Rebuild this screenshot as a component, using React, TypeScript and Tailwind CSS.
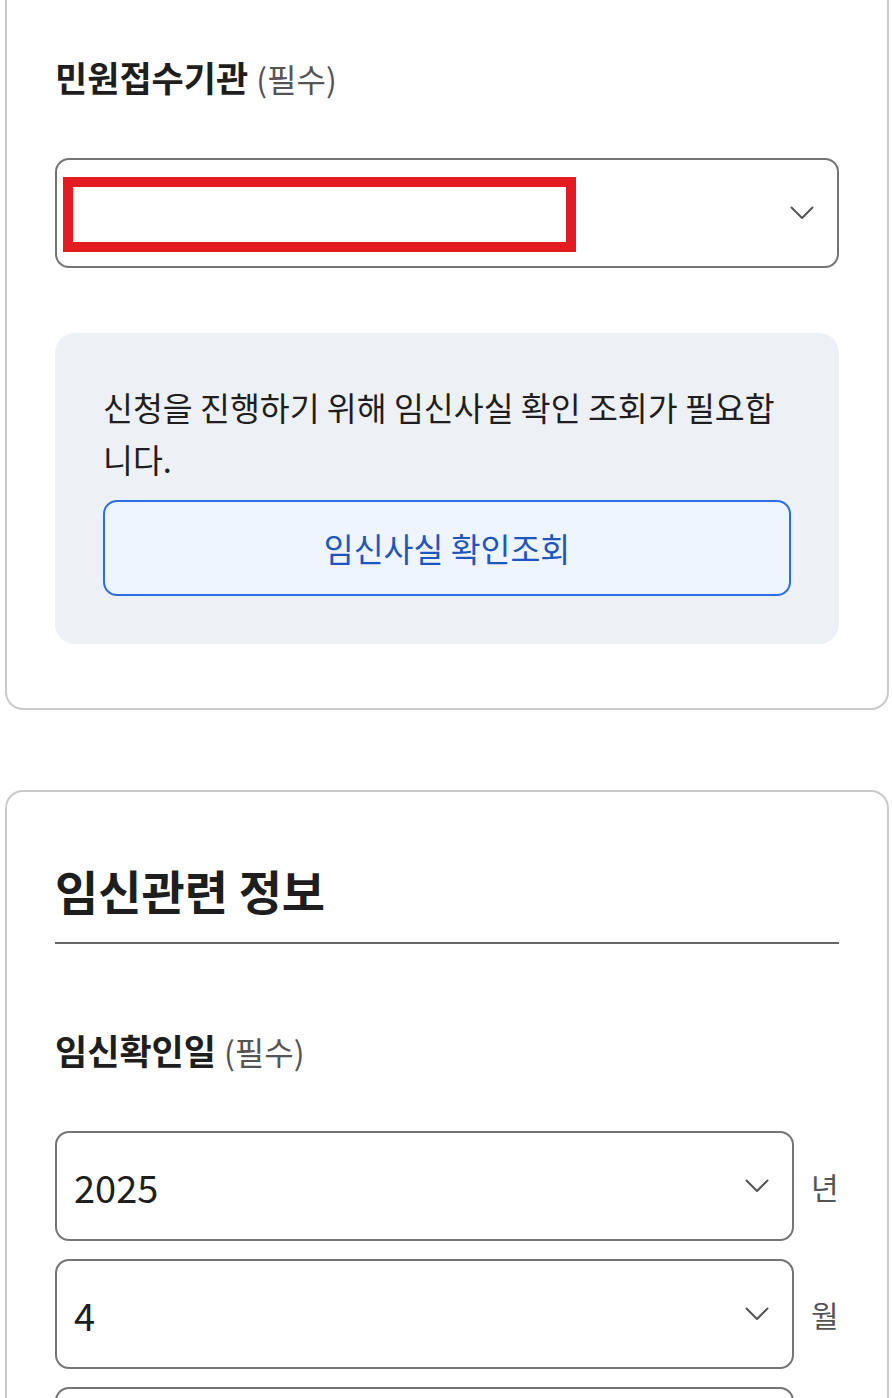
import React from 'react';

const font = "font-['Noto_Sans_CJK_KR','Noto_Sans',sans-serif]";

function Chevron() {
  return (
    <svg width="24" height="14" viewBox="0 0 24 14" fill="none" className="shrink-0">
      <path d="M1.5 1.5 L12 12 L22.5 1.5" stroke="#555" strokeWidth="2" strokeLinecap="round" strokeLinejoin="round" />
    </svg>
  );
}

function FieldLabel({ text }: { text: string }) {
  return (
    <div className="mb-[57px] flex items-baseline gap-[8px] leading-[46px]">
      <span className="text-[35px] font-bold text-[#1e1e1e]">{text}</span>
      <span className="text-[32px] text-[#555]">(필수)</span>
    </div>
  );
}

function DateSelect({ value, unit }: { value: string; unit: string }) {
  return (
    <div className="flex items-center gap-[17px]">
      <div className="flex h-[110px] flex-1 items-center justify-between rounded-[14px] border-2 border-[#757575] bg-white pl-[17px] pr-[23px]">
        <span className="text-[38px] text-[#1e1e1e]">{value}</span>
        <Chevron />
      </div>
      <span className="w-[28px] text-[30px] text-[#555]">{unit}</span>
    </div>
  );
}

export default function App() {
  return (
    <div className={`${font} min-h-[1398px] bg-white pb-10`}>
      {/* 민원접수기관 카드 (상단은 스크롤로 잘림) */}
      <div className="ml-[5px] w-[884px] rounded-b-[18px] border-2 border-t-0 border-[#cacaca] px-[48px] pt-[54px] pb-[64px]">
        <FieldLabel text="민원접수기관" />

        <div className="relative flex h-[110px] items-center justify-end rounded-[14px] border-2 border-[#757575] bg-white pr-[23px]">
          {/* 가림 처리 */}
          <div className="absolute left-[6px] top-[17px] h-[75px] w-[513px] border-[10px] border-[#e41b1f]" />
          <Chevron />
        </div>

        <div className="mt-[65px] flex flex-col gap-[15px] rounded-[20px] bg-[#edf0f5] p-[48px]">
          <p className="text-[32.5px] leading-[52px] text-[#1e1e1e]">
            신청을 진행하기 위해 임신사실 확인 조회가 필요합니다.
          </p>
          <button className="h-[96px] w-full rounded-[14px] border-2 border-[#2b6fe3] bg-[#eef5ff] text-[32.5px] text-[#1f55bf]">
            임신사실 확인조회
          </button>
        </div>
      </div>

      {/* 임신관련 정보 카드 */}
      <div className="ml-[5px] mt-[80px] w-[884px] rounded-[18px] border-2 border-[#cacaca] px-[48px] pt-[68px] pb-[64px]">
        <h2 className="border-b-2 border-[#666] pb-[22px] text-[47px] font-bold leading-[60px] text-[#1e1e1e]">
          임신관련 정보
        </h2>

        <div className="mt-[83px]">
          <FieldLabel text="임신확인일" />
          <div className="flex flex-col gap-[18px]">
            <DateSelect value="2025" unit="년" />
            <DateSelect value="4" unit="월" />
            <DateSelect value="15" unit="일" />
          </div>
        </div>
      </div>
    </div>
  );
}
